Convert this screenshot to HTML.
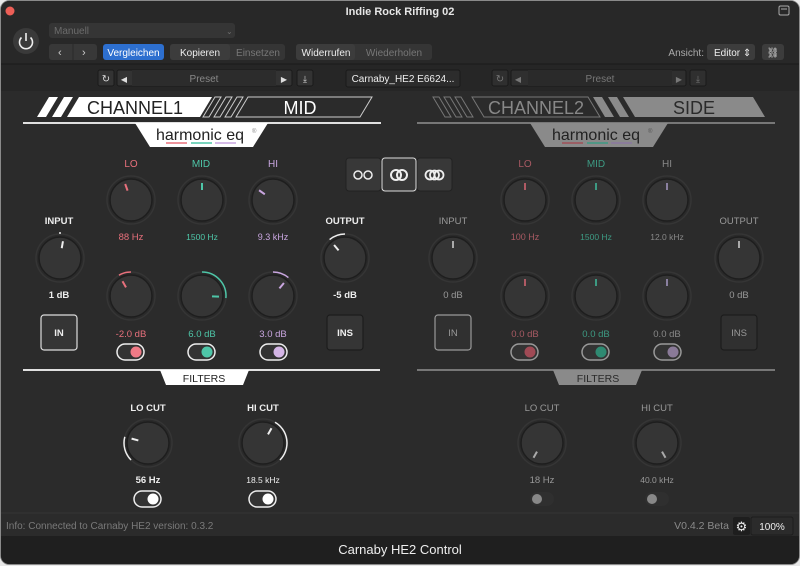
<!DOCTYPE html>
<html><head><meta charset="utf-8"><style>
html,body{margin:0;padding:0;background:#e8e8e8;width:800px;height:566px;overflow:hidden}
svg{display:block}
text{font-family:"Liberation Sans",sans-serif}
</style></head><body>
<svg width="800" height="566" viewBox="0 0 800 566" xmlns="http://www.w3.org/2000/svg">
<defs>
<g id="kb"><circle r="24" fill="#2a2a2a" stroke="#353535" stroke-width="1.5"/><circle r="21" fill="#353535" stroke="#1e1e1e" stroke-width="1.5"/></g>
</defs>
<!-- window -->
<rect x="0.5" y="0.5" width="799" height="564" rx="9" fill="#1f1f1f" stroke="#8a8a8a"/>
<rect x="1" y="1" width="798" height="90" rx="8" fill="#282828"/>
<rect x="1" y="64" width="798" height="27" fill="#262626"/>
<line x1="1" y1="64" x2="799" y2="64" stroke="#1a1a1a"/>
<circle cx="10" cy="11" r="4.5" fill="#ed5f57"/>
<text x="400" y="15" font-size="11" font-weight="bold" fill="#e6e6e6" text-anchor="middle">Indie Rock Riffing 02</text>
<rect x="779" y="6" width="10" height="9" rx="1.5" fill="none" stroke="#aaa"/><line x1="781" y1="9" x2="787" y2="9" stroke="#aaa"/>
<!-- power -->
<circle cx="26" cy="41" r="13" fill="#3a3a3a"/>
<path d="M21.5 37.5 A6.5 6.5 0 1 0 30.5 37.5" fill="none" stroke="#eee" stroke-width="1.6"/><line x1="26" y1="33" x2="26" y2="41" stroke="#eee" stroke-width="1.6"/>
<rect x="49" y="23" width="186" height="15" rx="3" fill="#353535"/>
<text x="54" y="34" font-size="10" fill="#6c6c6c">Manuell</text>
<text x="226" y="34" font-size="8" fill="#6c6c6c">⌄</text>
<rect x="49" y="44" width="48" height="16" rx="3" fill="#383838"/><line x1="73" y1="44" x2="73" y2="60" stroke="#2a2a2a"/>
<text x="58" y="56" font-size="11" fill="#ccc">‹</text><text x="82" y="56" font-size="11" fill="#ccc">›</text>
<rect x="103" y="44" width="61" height="16" rx="3" fill="#2d6fcf"/><text x="133.5" y="56" font-size="10" fill="#fff" text-anchor="middle">Vergleichen</text>
<rect x="170" y="44" width="115" height="16" rx="3" fill="#353535"/><rect x="170" y="44" width="60" height="16" rx="3" fill="#3c3c3c"/>
<text x="200" y="56" font-size="10" fill="#eee" text-anchor="middle">Kopieren</text><text x="258" y="56" font-size="10" fill="#777" text-anchor="middle">Einsetzen</text>
<rect x="296" y="44" width="136" height="16" rx="3" fill="#353535"/><rect x="296" y="44" width="59" height="16" rx="3" fill="#3c3c3c"/>
<text x="326" y="56" font-size="10" fill="#eee" text-anchor="middle">Widerrufen</text><text x="394" y="56" font-size="10" fill="#777" text-anchor="middle">Wiederholen</text>
<text x="704" y="56" font-size="10" fill="#aaa" text-anchor="end">Ansicht:</text>
<rect x="707" y="44" width="48" height="16" rx="3" fill="#3c3c3c"/><text x="714" y="56" font-size="10" fill="#eee">Editor ⇕</text>
<rect x="762" y="44" width="22" height="16" rx="3" fill="#3c3c3c"/><text x="773" y="56" font-size="10" fill="#ddd" text-anchor="middle">⛓</text>
<!-- preset rows -->
<g font-size="10">
<rect x="98" y="70" width="16" height="16" rx="2" fill="#333" stroke="#1a1a1a"/><text x="106" y="82" fill="#ddd" text-anchor="middle">↻</text>
<rect x="117" y="70" width="175" height="16" rx="2" fill="#333" stroke="#1a1a1a"/><rect x="132" y="70" width="144" height="16" fill="#2c2c2c"/>
<text x="124" y="82" fill="#ddd" text-anchor="middle" font-size="8">◀</text><text x="204" y="82" fill="#888" text-anchor="middle">Preset</text><text x="284" y="82" fill="#ddd" text-anchor="middle" font-size="8">▶</text>
<rect x="297" y="70" width="16" height="16" rx="2" fill="#333" stroke="#1a1a1a"/><text x="305" y="82" fill="#ddd" text-anchor="middle" font-size="9">⤓</text>
<rect x="346" y="70" width="114" height="17" rx="2" fill="#2c2c2c" stroke="#1a1a1a"/><text x="403" y="82" fill="#eee" text-anchor="middle">Carnaby_HE2 E6624...</text>
<rect x="492" y="70" width="16" height="16" rx="2" fill="#2f2f2f" stroke="#1a1a1a"/><text x="500" y="82" fill="#777" text-anchor="middle">↻</text>
<rect x="511" y="70" width="175" height="16" rx="2" fill="#2f2f2f" stroke="#1a1a1a"/><rect x="528" y="70" width="144" height="16" fill="#2a2a2a"/>
<text x="518" y="82" fill="#777" text-anchor="middle" font-size="8">◀</text><text x="600" y="82" fill="#777" text-anchor="middle">Preset</text><text x="679" y="82" fill="#777" text-anchor="middle" font-size="8">▶</text>
<rect x="690" y="70" width="16" height="16" rx="2" fill="#2f2f2f" stroke="#1a1a1a"/><text x="698" y="82" fill="#777" text-anchor="middle" font-size="9">⤓</text>
</g>
<!-- plugin area -->
<rect x="1" y="91" width="798" height="445" fill="#2b2b2b"/>
<!-- LEFT header -->
<g>
<polygon points="37,117 49,97 58,97 46,117" fill="#fff"/>
<polygon points="52,117 64,97 73,97 61,117" fill="#fff"/>
<polygon points="67,117 79,97 212,97 200,117" fill="#fff"/>
<text x="135" y="114" font-size="18" fill="#222" text-anchor="middle">CHANNEL1</text>
<g fill="none" stroke="#ccc" stroke-width="1">
<polygon points="203,117 215,97 221,97 209,117"/><polygon points="214,117 226,97 232,97 220,117"/><polygon points="225,117 237,97 243,97 231,117"/>
<polygon points="236,117 248,97 372,97 360,117"/></g>
<text x="300" y="114" font-size="18" fill="#fff" text-anchor="middle">MID</text>
<line x1="23" y1="123" x2="381" y2="123" stroke="#e0e0e0" stroke-width="2"/>
<polygon points="135,123 268,123 253,147 150,147" fill="#fff"/>
<text x="200" y="140" font-size="16" fill="#222" text-anchor="middle">harmonic eq</text><text x="252" y="133" font-size="6" fill="#888">®</text>
<line x1="166" y1="143" x2="187" y2="143" stroke="#e8707c" stroke-width="1.5"/><line x1="191" y1="143" x2="212" y2="143" stroke="#4ec6a8" stroke-width="1.5"/><line x1="215" y1="143" x2="236" y2="143" stroke="#c9a6e0" stroke-width="1.5"/>
</g>
<!-- RIGHT header -->
<g>
<g fill="none" stroke="#777" stroke-width="1">
<polygon points="433,97 439,97 451,117 445,117"/><polygon points="444,97 450,97 462,117 456,117"/><polygon points="455,97 461,97 473,117 467,117"/>
<polygon points="472,97 588,97 600,117 484,117"/></g>
<text x="536" y="114" font-size="18" fill="#888" text-anchor="middle">CHANNEL2</text>
<polygon points="593,97 602,97 614,117 605,117" fill="#8a8a8a"/><polygon points="608,97 617,97 629,117 620,117" fill="#8a8a8a"/>
<polygon points="623,97 753,97 765,117 635,117" fill="#8a8a8a"/>
<text x="694" y="114" font-size="18" fill="#2a2a2a" text-anchor="middle">SIDE</text>
<line x1="417" y1="123" x2="775" y2="123" stroke="#777" stroke-width="2"/>
<polygon points="530,123 668,123 653,147 545,147" fill="#8a8a8a"/>
<text x="596" y="140" font-size="16" fill="#222" text-anchor="middle">harmonic eq</text><text x="648" y="133" font-size="6" fill="#555">®</text>
<line x1="562" y1="143" x2="583" y2="143" stroke="#a05058" stroke-width="1.5"/><line x1="587" y1="143" x2="608" y2="143" stroke="#3d9a83" stroke-width="1.5"/><line x1="611" y1="143" x2="632" y2="143" stroke="#8a78a0" stroke-width="1.5"/>
</g>
<!-- link buttons -->
<rect x="346" y="158" width="35" height="33" rx="3" fill="#383838" stroke="#222"/>
<circle cx="358" cy="175" r="4" fill="none" stroke="#eee" stroke-width="1.5"/><circle cx="368" cy="175" r="4" fill="none" stroke="#eee" stroke-width="1.5"/>
<rect x="382" y="158" width="34" height="33" rx="3" fill="#383838" stroke="#ddd"/>
<circle cx="396" cy="175" r="5" fill="none" stroke="#eee" stroke-width="2"/><circle cx="402" cy="175" r="5" fill="none" stroke="#eee" stroke-width="2"/>
<rect x="417" y="158" width="35" height="33" rx="3" fill="#383838" stroke="#222"/>
<circle cx="430" cy="175" r="4.5" fill="none" stroke="#eee" stroke-width="1.8"/><circle cx="434.5" cy="175" r="4.5" fill="none" stroke="#eee" stroke-width="1.8"/><circle cx="439" cy="175" r="4.5" fill="none" stroke="#eee" stroke-width="1.8"/>

<!-- LEFT controls -->
<g font-size="10" text-anchor="middle">
<text x="131" y="167" fill="#e8707c">LO</text><text x="201" y="167" fill="#4ec6a8">MID</text><text x="273" y="167" fill="#c9a6e0">HI</text>
<g transform="translate(131,200)"><use href="#kb"/><line x1="0" y1="-17" x2="0" y2="-10" stroke="#e8707c" stroke-width="2" transform="rotate(-20)"/></g>
<g transform="translate(202,200)"><use href="#kb"/><line x1="0" y1="-17" x2="0" y2="-10" stroke="#4ec6a8" stroke-width="2"/></g>
<g transform="translate(273,200)"><use href="#kb"/><line x1="0" y1="-17" x2="0" y2="-10" stroke="#c9a6e0" stroke-width="2" transform="rotate(-55)"/></g>
<text x="131" y="240" fill="#e8707c" font-size="9.5">88 Hz</text><text x="202" y="240" fill="#4ec6a8" font-size="8.5">1500 Hz</text><text x="273" y="240" fill="#c9a6e0" font-size="9">9.3 kHz</text>
<g transform="translate(131,296)"><use href="#kb"/><path d="M-12,-20.8 A24,24 0 0 1 0,-24" fill="none" stroke="#e8707c" stroke-width="1.5"/><line x1="0" y1="-17" x2="0" y2="-10" stroke="#e8707c" stroke-width="2" transform="rotate(-30)"/></g>
<g transform="translate(202,296)"><use href="#kb"/><path d="M0,-24 A24,24 0 0 1 23.9,2.1" fill="none" stroke="#4ec6a8" stroke-width="1.5"/><line x1="0" y1="-17" x2="0" y2="-10" stroke="#4ec6a8" stroke-width="2" transform="rotate(92)"/></g>
<g transform="translate(273,296)"><use href="#kb"/><path d="M0,-24 A24,24 0 0 1 15.4,-18.4" fill="none" stroke="#c9a6e0" stroke-width="1.5"/><line x1="0" y1="-17" x2="0" y2="-10" stroke="#c9a6e0" stroke-width="2" transform="rotate(40)"/></g>
<text x="131" y="337" fill="#e8707c" font-size="9.5">-2.0 dB</text><text x="202" y="337" fill="#4ec6a8" font-size="9.5">6.0 dB</text><text x="273" y="337" fill="#c9a6e0" font-size="9.5">3.0 dB</text>
<g><rect x="117" y="344" width="27" height="16" rx="8" fill="#333" stroke="#eee" stroke-width="1.5"/><circle cx="136" cy="352" r="5.5" fill="#f07a86"/></g>
<g><rect x="188" y="344" width="27" height="16" rx="8" fill="#333" stroke="#eee" stroke-width="1.5"/><circle cx="207" cy="352" r="5.5" fill="#4ec6a8"/></g>
<g><rect x="260" y="344" width="27" height="16" rx="8" fill="#333" stroke="#eee" stroke-width="1.5"/><circle cx="279" cy="352" r="5.5" fill="#d4b5e6"/></g>
<text x="59" y="224" fill="#eee" font-size="9.5" font-weight="bold">INPUT</text>
<g transform="translate(60,258)"><use href="#kb"/><line x1="0" y1="-26" x2="0" y2="-24" stroke="#eee" stroke-width="1.5"/><line x1="0" y1="-17" x2="0" y2="-10" stroke="#eee" stroke-width="2" transform="rotate(10)"/></g>
<text x="59" y="298" fill="#eee" font-size="9.5" font-weight="bold">1 dB</text>
<rect x="41" y="315" width="36" height="35" rx="3" fill="#353535" stroke="#ddd" stroke-width="1.2"/><text x="59" y="336" fill="#eee" font-size="9.5" font-weight="bold">IN</text>
<text x="345" y="224" fill="#eee" font-size="9.5" font-weight="bold">OUTPUT</text>
<g transform="translate(345,258)"><use href="#kb"/><path d="M-15.4,-18.4 A24,24 0 0 1 0,-24" fill="none" stroke="#eee" stroke-width="1.5"/><line x1="0" y1="-17" x2="0" y2="-10" stroke="#eee" stroke-width="2" transform="rotate(-40)"/></g>
<text x="345" y="298" fill="#eee" font-size="9.5" font-weight="bold">-5 dB</text>
<rect x="327" y="315" width="36" height="35" rx="3" fill="#353535" stroke="#1c1c1c" stroke-width="1.2"/><text x="345" y="336" fill="#eee" font-size="9.5" font-weight="bold">INS</text>
</g>

<!-- RIGHT controls -->
<g font-size="10" text-anchor="middle">
<text x="525" y="167" fill="#a85a63">LO</text><text x="596" y="167" fill="#3d9a83">MID</text><text x="667" y="167" fill="#888">HI</text>
<g transform="translate(525,200)"><use href="#kb"/><line x1="0" y1="-17" x2="0" y2="-10" stroke="#b05a64" stroke-width="2"/></g>
<g transform="translate(596,200)"><use href="#kb"/><line x1="0" y1="-17" x2="0" y2="-10" stroke="#3d9a83" stroke-width="2"/></g>
<g transform="translate(667,200)"><use href="#kb"/><line x1="0" y1="-17" x2="0" y2="-10" stroke="#8a80a0" stroke-width="2"/></g>
<text x="525" y="240" fill="#a85a63" font-size="9">100 Hz</text><text x="596" y="240" fill="#3d9a83" font-size="8.5">1500 Hz</text><text x="667" y="240" fill="#888" font-size="8.5">12.0 kHz</text>
<g transform="translate(525,296)"><use href="#kb"/><line x1="0" y1="-17" x2="0" y2="-10" stroke="#b05a64" stroke-width="2"/></g>
<g transform="translate(596,296)"><use href="#kb"/><line x1="0" y1="-17" x2="0" y2="-10" stroke="#3d9a83" stroke-width="2"/></g>
<g transform="translate(667,296)"><use href="#kb"/><line x1="0" y1="-17" x2="0" y2="-10" stroke="#8a80a0" stroke-width="2"/></g>
<text x="525" y="337" fill="#a85a63" font-size="9.5">0.0 dB</text><text x="596" y="337" fill="#3d9a83" font-size="9.5">0.0 dB</text><text x="667" y="337" fill="#888" font-size="9.5">0.0 dB</text>
<g><rect x="511" y="344" width="27" height="16" rx="8" fill="#333" stroke="#999" stroke-width="1.5"/><circle cx="530" cy="352" r="5.5" fill="#a04a55"/></g>
<g><rect x="582" y="344" width="27" height="16" rx="8" fill="#333" stroke="#999" stroke-width="1.5"/><circle cx="601" cy="352" r="5.5" fill="#2f8a72"/></g>
<g><rect x="654" y="344" width="27" height="16" rx="8" fill="#333" stroke="#999" stroke-width="1.5"/><circle cx="673" cy="352" r="5.5" fill="#8a7a98"/></g>
<text x="453" y="224" fill="#999" font-size="9.5">INPUT</text>
<g transform="translate(453,258)"><use href="#kb"/><line x1="0" y1="-17" x2="0" y2="-10" stroke="#aaa" stroke-width="2"/></g>
<text x="453" y="298" fill="#999" font-size="9.5">0 dB</text>
<rect x="435" y="315" width="36" height="35" rx="3" fill="#303030" stroke="#999" stroke-width="1.2"/><text x="453" y="336" fill="#999" font-size="9.5">IN</text>
<text x="739" y="224" fill="#999" font-size="9.5">OUTPUT</text>
<g transform="translate(739,258)"><use href="#kb"/><line x1="0" y1="-17" x2="0" y2="-10" stroke="#aaa" stroke-width="2"/></g>
<text x="739" y="298" fill="#999" font-size="9.5">0 dB</text>
<rect x="721" y="315" width="36" height="35" rx="3" fill="#303030" stroke="#1c1c1c" stroke-width="1.2"/><text x="739" y="336" fill="#999" font-size="9.5">INS</text>
</g>

<!-- FILTERS -->
<line x1="23" y1="370" x2="380" y2="370" stroke="#e0e0e0" stroke-width="2"/>
<polygon points="160,370 249,370 243,385 166,385" fill="#fff"/>
<text x="204" y="382" font-size="10.5" fill="#222" text-anchor="middle">FILTERS</text>
<line x1="417" y1="370" x2="775" y2="370" stroke="#777" stroke-width="2"/>
<polygon points="553,370 642,370 636,385 559,385" fill="#8a8a8a"/>
<text x="598" y="382" font-size="10.5" fill="#2a2a2a" text-anchor="middle">FILTERS</text>
<g font-size="9.5" text-anchor="middle">
<text x="148" y="411" fill="#eee" font-weight="bold">LO CUT</text><text x="263" y="411" fill="#eee" font-weight="bold">HI CUT</text>
<g transform="translate(148,443)"><use href="#kb"/><path d="M-16.97,16.97 A24,24 0 0 1 -23.18,-6.21" fill="none" stroke="#eee" stroke-width="1.5"/><line x1="0" y1="-17" x2="0" y2="-10" stroke="#eee" stroke-width="2" transform="rotate(-75)"/></g>
<g transform="translate(263,443)"><use href="#kb"/><path d="M12,-20.78 A24,24 0 0 1 16.97,16.97" fill="none" stroke="#eee" stroke-width="1.5"/><line x1="0" y1="-17" x2="0" y2="-10" stroke="#eee" stroke-width="2" transform="rotate(30)"/></g>
<text x="148" y="483" fill="#eee" font-weight="bold">56 Hz</text><text x="263" y="483" fill="#eee" font-size="8.5">18.5 kHz</text>
<rect x="134" y="491" width="27" height="16" rx="8" fill="#333" stroke="#eee" stroke-width="1.5"/><circle cx="153" cy="499" r="5.5" fill="#fff"/>
<rect x="249" y="491" width="27" height="16" rx="8" fill="#333" stroke="#eee" stroke-width="1.5"/><circle cx="268" cy="499" r="5.5" fill="#fff"/>
<text x="542" y="411" fill="#999">LO CUT</text><text x="657" y="411" fill="#999">HI CUT</text>
<g transform="translate(542,443)"><use href="#kb"/><line x1="0" y1="-17" x2="0" y2="-10" stroke="#aaa" stroke-width="2" transform="rotate(-150)"/></g>
<g transform="translate(657,443)"><use href="#kb"/><line x1="0" y1="-17" x2="0" y2="-10" stroke="#aaa" stroke-width="2" transform="rotate(150)"/></g>
<text x="542" y="483" fill="#999">18 Hz</text><text x="657" y="483" fill="#999" font-size="8.5">40.0 kHz</text>
<rect x="530" y="492" width="24" height="14" rx="7" fill="#2f2f2f"/><circle cx="537" cy="499" r="5" fill="#888"/>
<rect x="645" y="492" width="24" height="14" rx="7" fill="#2f2f2f"/><circle cx="652" cy="499" r="5" fill="#888"/>
</g>
<!-- status -->
<line x1="1" y1="513" x2="799" y2="513" stroke="#353535"/>
<text x="6" y="529" font-size="10" fill="#7a7a7a">Info: Connected to Carnaby HE2 version: 0.3.2</text>
<text x="729" y="529" font-size="10.5" fill="#8a8a8a" text-anchor="end">V0.4.2 Beta</text>
<rect x="733" y="517" width="17" height="18" rx="2" fill="#1e1e1e"/><text x="741.5" y="531" font-size="13" fill="#eee" text-anchor="middle">⚙</text>
<rect x="751" y="517" width="42" height="18" rx="2" fill="#2b2b2b" stroke="#1c1c1c"/><text x="772" y="530" font-size="10" fill="#eee" text-anchor="middle">100%</text>
<rect x="1" y="536" width="798" height="28" rx="8" fill="#1f1f1f"/>
<text x="400" y="554" font-size="13" fill="#eee" text-anchor="middle">Carnaby HE2 Control</text>
</svg>
</body></html>
